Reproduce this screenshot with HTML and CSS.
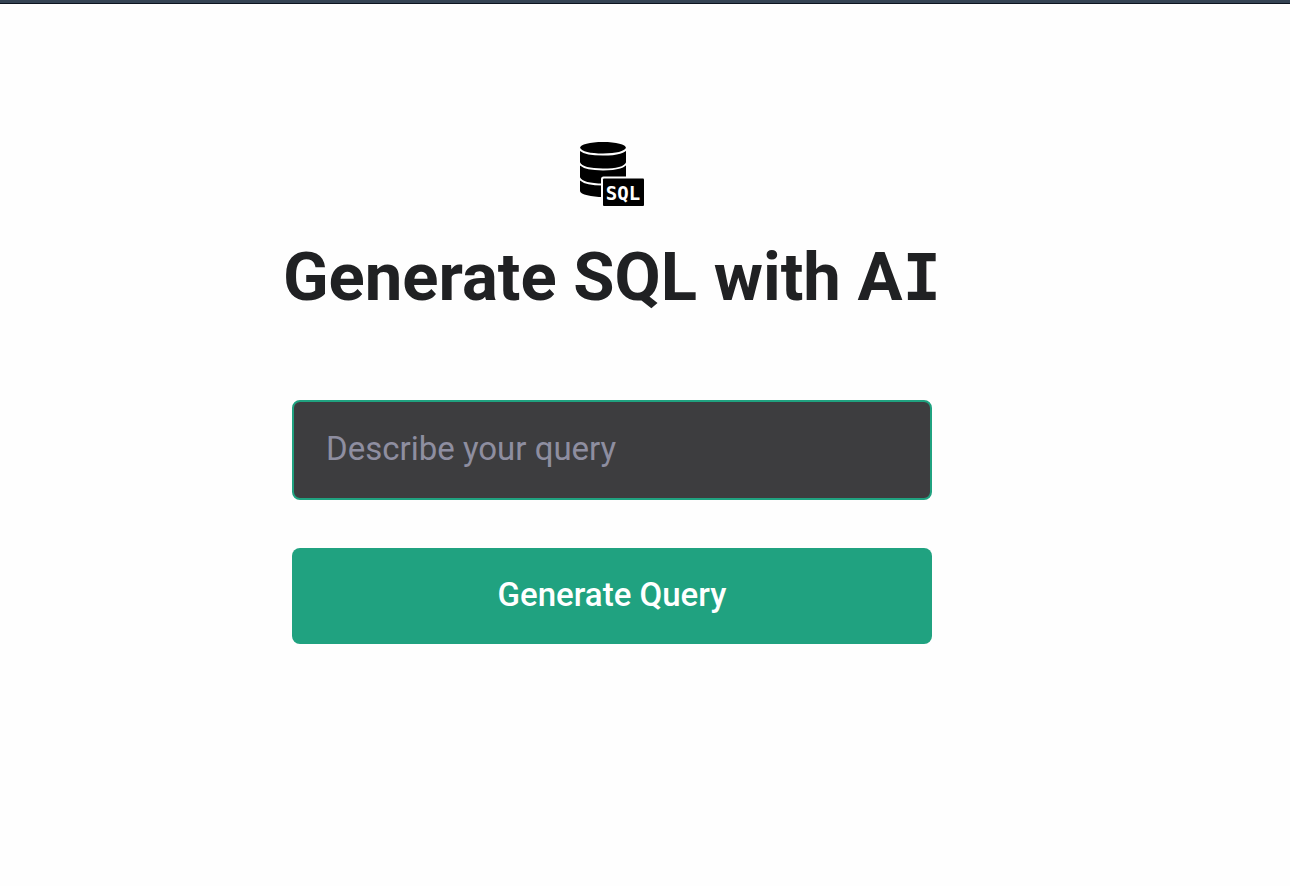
FILE: index.html
```html
<!DOCTYPE html>
<html lang="en">
<head>
  <meta charset="utf-8">
  <meta name="viewport" content="width=device-width, initial-scale=1">
  <title>Generate SQL with AI</title>
  <link rel="stylesheet" href="styles.css">
</head>
<body class="page">
  <div class="topbar"></div>
  <main class="main">
    <svg class="logo" viewBox="0 0 64 64" aria-hidden="true">
      <path d="M0 6C0 2.500 10 0 23 0S46 2.500 46 6V50C44 53 34 55 23 55S0 52.500 0 49Z"/>
      <path class="logo-line" d="M-1 6C1 10.500 10 12.500 23 12.500S45 10.500 47 6M-1 20.500C1 25.500 10 27.500 23 27.500S45 25.500 47 20.500M-1 35.500C1 40 10 42.500 23 42.500S45 40 47 35.500"/>
      <path class="logo-gap" d="M21 66V37Q21 34.500 23.500 34.500H66V66Z"/>
      <rect x="23" y="36.500" width="41" height="27.500" rx="1"/>
      <text class="logo-text" x="43" y="58" text-anchor="middle">SQL</text>
    </svg>
    <h1 class="title">Generate SQL with A<span class="slab">I</span></h1>
    <form class="form">
      <input class="field" type="text" name="query" placeholder="Describe your query" aria-label="Describe your query">
      <button class="submit" type="submit">Generate Query</button>
    </form>
  </main>
</body>
</html>
```
FILE: styles.css
```css
* {
  box-sizing: border-box;
}

.page {
  margin: 0;
  background: #fefefe;
  color: #202123;
  font-family: Roboto, "Liberation Sans", sans-serif;
}

.topbar {
  height: 4px;
  background: #354353;
  border-bottom: 1px solid #0c141f;
}

.main {
  display: flex;
  flex-direction: column;
  align-items: center;
  padding: 138px 66px 64px 0;
}

.logo {
  width: 64px;
  height: 64px;
}

.logo-line {
  fill: none;
  stroke: #fefefe;
  stroke-width: 2;
}

.logo-gap {
  fill: #fefefe;
}

.logo-text {
  fill: #fefefe;
  font: 700 19px "DejaVu Sans Mono", monospace;
}

.title {
  margin: 32px 0 84px;
  font-size: 67px;
  line-height: 78px;
  font-weight: 700;
  text-align: center;
}

/* Capital I with crossbars */
.slab {
  font-family: "DejaVu Sans Mono", monospace;
  font-size: 64px;
  line-height: 1;
}

.form {
  display: flex;
  flex-direction: column;
  gap: 48px;
  width: 100%;
  max-width: 640px;
}

.field {
  width: 100%;
  padding: 25px 32px 27px;
  border: 2px solid #20a280;
  border-radius: 8px;
  background: #3d3d3f;
  color: #ffffff;
  font: 400 33px/44px Roboto, "Liberation Sans", sans-serif;
}

.field::placeholder {
  color: #8e8ea0;
  opacity: 1;
}

.submit {
  padding: 25px 32px 27px;
  border: 0;
  border-radius: 8px;
  background: #20a280;
  color: #ffffff;
  font: 500 33px/44px Roboto, "Liberation Sans", sans-serif;
  cursor: pointer;
}
```
